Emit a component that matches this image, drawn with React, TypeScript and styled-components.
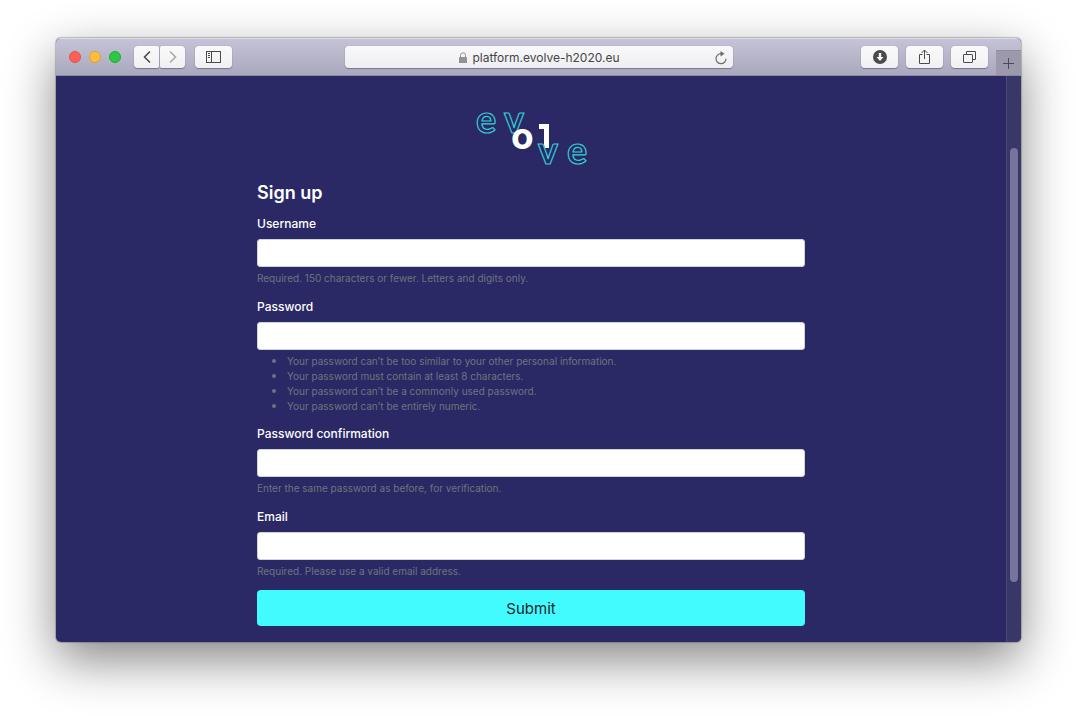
import React from "react";
import styled, { createGlobalStyle } from "styled-components";

const GlobalStyle = createGlobalStyle`
  *, *::before, *::after { box-sizing: border-box; }
  body {
    margin: 0;
    background: #ffffff;
    font-family: Inter, "Liberation Sans", sans-serif;
  }
`;

const Desktop = styled.div`
  padding: 38px 56px 74px;
`;

const BrowserWindow = styled.div`
  border-radius: 5px;
  background: #2a2965;
  box-shadow: 0 0 1px 1px rgba(0, 0, 0, 0.22), 0 18px 50px rgba(0, 0, 0, 0.48);
  overflow: hidden;
`;

const Toolbar = styled.header`
  display: grid;
  grid-template-columns: 1fr minmax(0, 388px) 1fr;
  height: 38px;
  background: linear-gradient(#c5c3d7, #aaa8bd);
  border-top: 1px solid #dddce8;
  border-bottom: 1px solid #8a889e;
`;

const ToolGroup = styled.div<{ $end?: boolean }>`
  display: flex;
  align-items: center;
  justify-content: ${(p) => (p.$end ? "flex-end" : "flex-start")};
  gap: 8px;
  padding-left: ${(p) => (p.$end ? 0 : 13)}px;
`;

const TrafficLights = styled.div`
  display: flex;
  gap: 8px;
  margin-right: 5px;
`;

const Light = styled.button<{ $fill: string; $edge: string }>`
  width: 12px;
  height: 12px;
  padding: 0;
  border: 1px solid ${(p) => p.$edge};
  border-radius: 50%;
  background: ${(p) => p.$fill};
`;

const NavPair = styled.div`
  display: flex;
  gap: 1px;
  margin-right: 2px;
`;

const ToolButton = styled.button<{ $w?: number; $side?: "left" | "right" }>`
  display: flex;
  align-items: center;
  justify-content: center;
  width: ${(p) => p.$w ?? 37}px;
  height: 22px;
  padding: 0;
  border: 0;
  border-radius: ${(p) =>
    p.$side === "left" ? "4px 2px 2px 4px" : p.$side === "right" ? "2px 4px 4px 2px" : "4px"};
  background: linear-gradient(#fafafb, #f0f0f2);
  box-shadow: 0 1px 1px rgba(60, 58, 85, 0.45), 0 0 1px rgba(60, 58, 85, 0.35);
  color: #4a4a4c;
`;

const AddressBar = styled.div`
  display: grid;
  grid-template-columns: 16px 1fr 16px;
  align-items: center;
  align-self: center;
  height: 22px;
  padding: 1px 3px 0 5px;
  border-radius: 4px;
  background: linear-gradient(#f9f9fb, #eeeef0);
  box-shadow: 0 1px 1px rgba(60, 58, 85, 0.45), 0 0 1px rgba(60, 58, 85, 0.35);
`;

const Address = styled.div`
  grid-column: 2;
  display: flex;
  align-items: center;
  justify-content: center;
  gap: 5px;
  color: #454547;
  font-size: 12px;
  line-height: 16px;
`;

const ReloadButton = styled.button`
  display: flex;
  padding: 0;
  border: 0;
  background: none;
  color: #6c6c70;
`;

const NewTabButton = styled.button`
  display: flex;
  align-items: center;
  justify-content: center;
  align-self: flex-end;
  width: 25px;
  height: 25px;
  padding: 0;
  border: 0;
  border-top: 1px solid #8f8da0;
  background: #9b99ab;
  color: #4b4a58;
`;

const Viewport = styled.div`
  display: flex;
`;

const Page = styled.main`
  flex: 1;
  display: flex;
  flex-direction: column;
  align-items: center;
  padding: 36px 16px 16px;
`;

const Logo = styled.svg`
  display: block;
  margin-bottom: 17px;
  overflow: visible;
  font-family: Lato, Inter, sans-serif;
  font-size: 38px;
  font-weight: 700;
`;

const ScrollTrack = styled.div`
  display: flex;
  width: 15px;
  padding: 72px 3px 60px;
  border-left: 1px solid #4a4979;
  background: #383768;
`;

const ScrollThumb = styled.div`
  flex: 1;
  border-radius: 4px;
  background: #76749d;
`;

const Form = styled.form`
  width: 100%;
  max-width: 548px;
`;

const Title = styled.h1`
  margin: 0;
  color: #ffffff;
  font-size: 18px;
  font-weight: 600;
  line-height: 20px;
`;

const Field = styled.div`
  margin-top: 12px;
`;

const Label = styled.label`
  display: block;
  margin-bottom: 6px;
  color: #ffffff;
  font-size: 12px;
  font-weight: 500;
  line-height: 18px;
`;

const Input = styled.input`
  display: block;
  width: 100%;
  height: 28px;
  padding: 0 8px;
  border: 1px solid #ced4da;
  border-radius: 3px;
  background: #ffffff;
  font-family: inherit;
  font-size: 12px;
`;

const HelpText = styled.p`
  margin: 4px 0 0;
  color: #6c757d;
  font-size: 10px;
  line-height: 15px;
`;

const HelpList = styled.ul`
  margin: 3px 0 0;
  padding-left: 30px;
  color: #6c757d;
  font-size: 10px;
  line-height: 14px;

  li::marker {
    font-size: 13px;
  }
`;

const SubmitButton = styled.button`
  display: block;
  width: 100%;
  height: 36px;
  margin-top: 11px;
  padding: 1px 0 0;
  border: 0;
  border-radius: 4px;
  background: #42fbfe;
  color: #212529;
  font-family: inherit;
  font-size: 15px;
  line-height: 22px;
`;

interface FieldSpec {
  id: string;
  label: string;
  type: string;
  help: string | string[];
}

const fields: FieldSpec[] = [
  {
    id: "username",
    label: "Username",
    type: "text",
    help: "Required. 150 characters or fewer. Letters and digits only.",
  },
  {
    id: "password",
    label: "Password",
    type: "password",
    help: [
      "Your password can’t be too similar to your other personal information.",
      "Your password must contain at least 8 characters.",
      "Your password can’t be a commonly used password.",
      "Your password can’t be entirely numeric.",
    ],
  },
  {
    id: "confirmation",
    label: "Password confirmation",
    type: "password",
    help: "Enter the same password as before, for verification.",
  },
  {
    id: "email",
    label: "Email",
    type: "email",
    help: "Required. Please use a valid email address.",
  },
];

const Chevron = ({ back }: { back?: boolean }) => (
  <svg width="10" height="14" viewBox="0 0 10 14" fill="none" stroke={back ? "#4a4a4c" : "#a9a9ad"} strokeWidth="1.6">
    <path d={back ? "M8 1.5 2.5 7 8 12.5" : "M2 1.5 7.500 7 2 12.5"} />
  </svg>
);

const SidebarIcon = () => (
  <svg width="15" height="12" viewBox="0 0 15 12" fill="none" stroke="currentColor">
    <rect x="0.5" y="0.5" width="14" height="11" />
    <path d="M5.500 0.5v11M2 2.500h2M2 4.500h2M2 6.500h2" />
  </svg>
);

const DownloadIcon = () => (
  <svg width="14" height="14" viewBox="0 0 14 14">
    <circle cx="7" cy="7" r="7" fill="currentColor" />
    <path d="M5.800 3h2.400v4H10.500L7 11 3.500 7h2.300z" fill="#f8f8f8" />
  </svg>
);

const ShareIcon = () => (
  <svg width="13" height="16" viewBox="0 0 13 16" fill="none" stroke="currentColor">
    <path d="M4.500 5.500h-3v9h10v-9h-3M6.500 10V1M3.500 4l3-3 3 3" />
  </svg>
);

const TabsIcon = () => (
  <svg width="13" height="13" viewBox="0 0 13 13" fill="none" stroke="currentColor">
    <rect x="0.5" y="3.5" width="9" height="8" rx="0.5" />
    <path d="M3.500 3.500v-3h9v8h-3" />
  </svg>
);

const LockIcon = () => (
  <svg width="8" height="11" viewBox="0 0 8 11">
    <rect y="5" width="8" height="6" rx="0.5" fill="#929295" />
    <path d="M1.500 5V3.300a2.500 2.500 0 0 1 5 0V5" fill="none" stroke="#929295" />
  </svg>
);

const ReloadIcon = () => (
  <svg width="14" height="14" viewBox="0 0 14 14" fill="none" stroke="currentColor" strokeWidth="1.200">
    <path d="M7 2.700a5 5 0 1 0 5 5" />
    <path d="M6.500 0 10.500 2.700 6.500 5.400z" fill="currentColor" stroke="none" />
  </svg>
);

const PlusIcon = () => (
  <svg width="11" height="11" viewBox="0 0 11 11" stroke="currentColor">
    <path d="M5.500 0v11M0 5.500h11" />
  </svg>
);

const EvolveLogo = () => (
  <Logo width="114" height="54" viewBox="0 0 114 54" role="img" aria-label="evolve">
    <g fill="none" stroke="#35cbd4" strokeWidth="1.2">
      <text x="2" y="21">e</text>
      <text x="30" y="21">v</text>
    </g>
    <g fill="#ffffff">
      <text x="37" y="37" fontFamily="Inter" fontSize="37" fontWeight="700">o</text>
      <rect x="65" y="12" width="10" height="5" />
      <rect x="70" y="12" width="5" height="24" />
    </g>
    <g fill="none" stroke="#35cbd4" strokeWidth="1.2">
      <text x="64" y="52">v</text>
      <text x="93" y="52">e</text>
    </g>
  </Logo>
);

export default function App() {
  return (
    <>
      <GlobalStyle />
      <Desktop>
        <BrowserWindow>
          <Toolbar>
            <ToolGroup>
              <TrafficLights>
                <Light $fill="#ff5f57" $edge="#e2504c" aria-label="Close" />
                <Light $fill="#ffbd3f" $edge="#dfa035" aria-label="Minimize" />
                <Light $fill="#2bca44" $edge="#20ab33" aria-label="Zoom" />
              </TrafficLights>
              <NavPair>
                <ToolButton $w={25} $side="left" aria-label="Back">
                  <Chevron back />
                </ToolButton>
                <ToolButton $w={25} $side="right" aria-label="Forward">
                  <Chevron />
                </ToolButton>
              </NavPair>
              <ToolButton aria-label="Sidebar">
                <SidebarIcon />
              </ToolButton>
            </ToolGroup>
            <AddressBar>
              <Address>
                <LockIcon />
                platform.evolve-h2020.eu
              </Address>
              <ReloadButton aria-label="Reload">
                <ReloadIcon />
              </ReloadButton>
            </AddressBar>
            <ToolGroup $end>
              <ToolButton aria-label="Downloads">
                <DownloadIcon />
              </ToolButton>
              <ToolButton aria-label="Share">
                <ShareIcon />
              </ToolButton>
              <ToolButton aria-label="Tabs">
                <TabsIcon />
              </ToolButton>
              <NewTabButton aria-label="New tab">
                <PlusIcon />
              </NewTabButton>
            </ToolGroup>
          </Toolbar>
          <Viewport>
            <Page>
              <EvolveLogo />
              <Form onSubmit={(e) => e.preventDefault()}>
                <Title>Sign up</Title>
                {fields.map((f) => (
                  <Field key={f.id}>
                    <Label htmlFor={f.id}>{f.label}</Label>
                    <Input id={f.id} type={f.type} />
                    {Array.isArray(f.help) ? (
                      <HelpList>
                        {f.help.map((h) => (
                          <li key={h}>{h}</li>
                        ))}
                      </HelpList>
                    ) : (
                      <HelpText>{f.help}</HelpText>
                    )}
                  </Field>
                ))}
                <SubmitButton type="submit">Submit</SubmitButton>
              </Form>
            </Page>
            <ScrollTrack>
              <ScrollThumb />
            </ScrollTrack>
          </Viewport>
        </BrowserWindow>
      </Desktop>
    </>
  );
}
